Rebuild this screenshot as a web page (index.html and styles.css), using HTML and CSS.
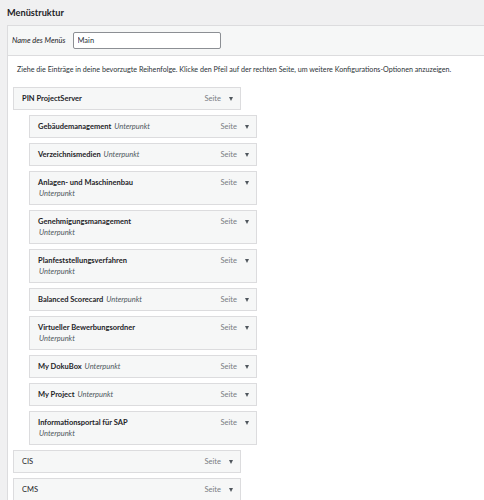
FILE: index.html
```html
<!DOCTYPE html>
<html lang="de">
<head>
  <meta charset="UTF-8" />
  <meta name="viewport" content="width=device-width, initial-scale=1.0" />
  <title>Menüs</title>
  <link rel="stylesheet" href="styles.css">
</head>
<body>

  <!-- TITEL -->
  <h2 class="page-title">Menüstruktur</h2>

  <div class="menu-box">
    <!-- NAME DES MENUS -->
    <div class="menu-head">
      <label for="menuName">Name des Menüs</label>
      <input type="text" id="menuName" value="Main" />
    </div>

    <div class="menu-body">
      <p class="hint">Ziehe die Einträge in deine bevorzugte Reihenfolge. Klicke den Pfeil auf der rechten Seite, um weitere Konfigurations-Optionen anzuzeigen.</p>

      <ul class="menu-list">
        <li class="item">
          <div class="bar">
            <span class="item-title"><b>PIN ProjectServer</b></span>
            <span class="controls"><span class="type">Seite</span><span class="arrow"></span></span>
          </div>
        </li>
        <li class="item sub">
          <div class="bar">
            <span class="item-title"><b>Gebäudemanagement</b> <em>Unterpunkt</em></span>
            <span class="controls"><span class="type">Seite</span><span class="arrow"></span></span>
          </div>
        </li>
        <li class="item sub">
          <div class="bar">
            <span class="item-title"><b>Verzeichnismedien</b> <em>Unterpunkt</em></span>
            <span class="controls"><span class="type">Seite</span><span class="arrow"></span></span>
          </div>
        </li>
        <li class="item sub two-line">
          <div class="bar">
            <span class="item-title"><b>Anlagen- und Maschinenbau</b> <em>Unterpunkt</em></span>
            <span class="controls"><span class="type">Seite</span><span class="arrow"></span></span>
          </div>
        </li>
        <li class="item sub two-line">
          <div class="bar">
            <span class="item-title"><b>Genehmigungsmanagement</b> <em>Unterpunkt</em></span>
            <span class="controls"><span class="type">Seite</span><span class="arrow"></span></span>
          </div>
        </li>
        <li class="item sub two-line">
          <div class="bar">
            <span class="item-title"><b>Planfeststellungsverfahren</b> <em>Unterpunkt</em></span>
            <span class="controls"><span class="type">Seite</span><span class="arrow"></span></span>
          </div>
        </li>
        <li class="item sub">
          <div class="bar">
            <span class="item-title"><b>Balanced Scorecard</b> <em>Unterpunkt</em></span>
            <span class="controls"><span class="type">Seite</span><span class="arrow"></span></span>
          </div>
        </li>
        <li class="item sub two-line">
          <div class="bar">
            <span class="item-title"><b>Virtueller Bewerbungsordner</b> <em>Unterpunkt</em></span>
            <span class="controls"><span class="type">Seite</span><span class="arrow"></span></span>
          </div>
        </li>
        <li class="item sub">
          <div class="bar">
            <span class="item-title"><b>My DokuBox</b> <em>Unterpunkt</em></span>
            <span class="controls"><span class="type">Seite</span><span class="arrow"></span></span>
          </div>
        </li>
        <li class="item sub">
          <div class="bar">
            <span class="item-title"><b>My Project</b> <em>Unterpunkt</em></span>
            <span class="controls"><span class="type">Seite</span><span class="arrow"></span></span>
          </div>
        </li>
        <li class="item sub two-line">
          <div class="bar">
            <span class="item-title"><b>Informationsportal für SAP</b> <em>Unterpunkt</em></span>
            <span class="controls"><span class="type">Seite</span><span class="arrow"></span></span>
          </div>
        </li>
        <li class="item">
          <div class="bar">
            <span class="item-title"><b class="plain">CIS</b></span>
            <span class="controls"><span class="type">Seite</span><span class="arrow"></span></span>
          </div>
        </li>
        <li class="item">
          <div class="bar">
            <span class="item-title"><b class="plain">CMS</b></span>
            <span class="controls"><span class="type">Seite</span><span class="arrow"></span></span>
          </div>
        </li>
      </ul>
    </div>
  </div>

</body>
</html>
```

FILE: styles.css
```css
body {
  margin: 0;
  background: #f0f0f1;
  font-family: Lato, "Noto Sans", sans-serif;
  font-size: 7.5px;
  color: #1d2327;
  overflow: hidden;
}

.page-title {
  margin: 0;
  padding-left: 7px;
  height: 25px;
  line-height: 25px;
  font-size: 9.2px;
  font-weight: 700;
}

.menu-box {
  margin-left: 7px;
  margin-right: -10px;
  border: 1px solid #dcdcde;
  background: #fff;
}

/* kopfzeile mit name */
.menu-head {
  display: flex;
  align-items: center;
  gap: 7px;
  height: 29px;
  padding-left: 4px;
  background: #f6f7f7;
  border-bottom: 1px solid #dcdcde;
}

.menu-head label {
  font-style: italic;
  color: #1d2327;
}

.menu-head input {
  width: 148px;
  height: 17px;
  box-sizing: border-box;
  padding: 0 4px;
  border: 1px solid #8c8f94;
  border-radius: 2px;
  font-family: inherit;
  font-size: 7.5px;
  color: #2c3338;
}

.menu-body {
  padding: 8px 0 20px 5px;
}

.hint {
  margin: 0 0 11px;
  padding-left: 4px;
  line-height: 12px;
  font-size: 7.15px;
  color: #2c3338;
}

.menu-list {
  list-style: none;
  margin: 0;
  padding: 0;
}

.item {
  margin-top: 5px;
  width: 228px;
}

.item.sub {
  margin-left: 16px;
}

.bar {
  display: flex;
  justify-content: space-between;
  align-items: flex-start;
  box-sizing: border-box;
  padding: 5px 7px 5px 8px;
  line-height: 11px;
  background: #f6f7f7;
  border: 1px solid #dcdcde;
}

.item-title b {
  font-weight: 700;
  color: #1d2327;
}

.item-title b.plain {
  font-weight: 400;
}

.item-title em {
  margin-left: 1px;
  color: #50575e;
}

.two-line .item-title em {
  display: block;
  margin-left: 1px;
}

.controls {
  display: flex;
  align-items: center;
  gap: 8px;
  height: 11px;
}

.type {
  color: #787c82;
}

.arrow {
  width: 0;
  height: 0;
  border-left: 2.5px solid transparent;
  border-right: 2.5px solid transparent;
  border-top: 4px solid #50575e;
}
```
